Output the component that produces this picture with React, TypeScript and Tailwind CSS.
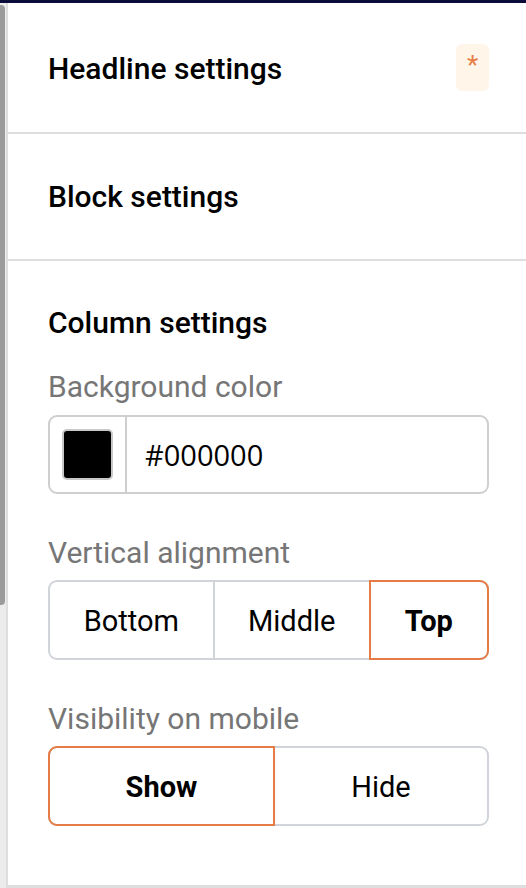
import React from 'react';

const vertical = ['Bottom', 'Middle', 'Top'];
const visibility = ['Show', 'Hide'];

const Label: React.FC<{ children: React.ReactNode }> = ({ children }) => (
  <div className="text-[30px] leading-[34px] text-[#767676]">{children}</div>
);

export default function App() {
  return (
    <div className="w-[526px] h-[888px] bg-white flex flex-col overflow-hidden font-['Roboto',sans-serif]">
      <div className="h-[3px] bg-[#0b0b3a]" />
      <div className="flex flex-1 min-h-0">
        {/* scrollbar rail */}
        <div className="w-[6px] bg-[#ececec] flex flex-col">
          <div className="h-[600px] bg-[#9b9b9b] rounded-br-[4px] rounded-tr-[4px] mt-[2px] mr-[1px]" />
        </div>
        <div className="flex-1 border-l-2 border-b-[3px] border-[#dedede] flex flex-col">
          <div className="h-[131px] flex items-center justify-between pl-[40px] pr-[37px] pt-[3px] border-b-2 border-[#dedede]">
            <span className="text-[30px] leading-[36px] font-medium text-black">Headline settings</span>
            <span className="w-[33px] h-[47px] -mt-[3px] rounded-[6px] bg-[#fff5e9] flex items-start justify-center pt-[8px] text-[26px] leading-none text-[#e87d46]">*</span>
          </div>
          <div className="h-[127px] flex items-center pl-[40px] border-b-2 border-[#dedede]">
            <span className="text-[30px] leading-[36px] font-medium text-black">Block settings</span>
          </div>
          <div className="flex flex-col pl-[40px] pr-[37px] pt-[45px]">
            <span className="text-[30px] leading-[34px] font-medium text-black">Column settings</span>
            <div className="mt-[30px]">
              <Label>Background color</Label>
            </div>
            <div className="mt-[11px] h-[79px] border-2 border-[#cfcfcf] rounded-[9px] flex">
              <div className="w-[77px] border-r-2 border-[#cfcfcf] flex items-center justify-center">
                <div className="w-[51px] h-[51px] rounded-[5px] bg-black border-2 border-[#c8c8c8]" />
              </div>
              <div className="flex-1 flex items-center pl-[18px] text-[29px] text-black font-['Open_Sans',sans-serif]">
                #000000
              </div>
            </div>
            <div className="mt-[42px]">
              <Label>Vertical alignment</Label>
            </div>
            <div className="mt-[10px] h-[80px] flex border-2 border-[#d1d5db] rounded-[9px]">
              {vertical.map((v, i) => {
                const active = v === 'Top';
                return (
                  <div
                    key={v}
                    className={
                      active
                        ? 'flex-[118] -m-[2px] ml-0 pt-[3px] border-2 border-[#e57c45] rounded-r-[9px] flex items-center justify-center text-[29px] font-bold text-black'
                        : i === 0
                        ? 'flex-[165] pt-[3px] border-r-2 border-[#d1d5db] flex items-center justify-center text-[29px] text-black'
                        : 'flex-[156] pt-[3px] flex items-center justify-center text-[29px] text-black'
                    }
                  >
                    {v}
                  </div>
                );
              })}
            </div>
            <div className="mt-[42px]">
              <Label>Visibility on mobile</Label>
            </div>
            <div className="mt-[10px] h-[80px] flex border-2 border-[#d1d5db] rounded-[9px]">
              {visibility.map((v) => {
                const active = v === 'Show';
                return (
                  <div
                    key={v}
                    className={
                      active
                        ? 'flex-[225] -m-[2px] mr-0 pt-[3px] border-2 border-[#e57c45] rounded-l-[9px] flex items-center justify-center text-[29px] font-bold text-black'
                        : 'flex-[214] pt-[3px] flex items-center justify-center text-[29px] text-black'
                    }
                  >
                    {v}
                  </div>
                );
              })}
            </div>
          </div>
        </div>
      </div>
    </div>
  );
}
